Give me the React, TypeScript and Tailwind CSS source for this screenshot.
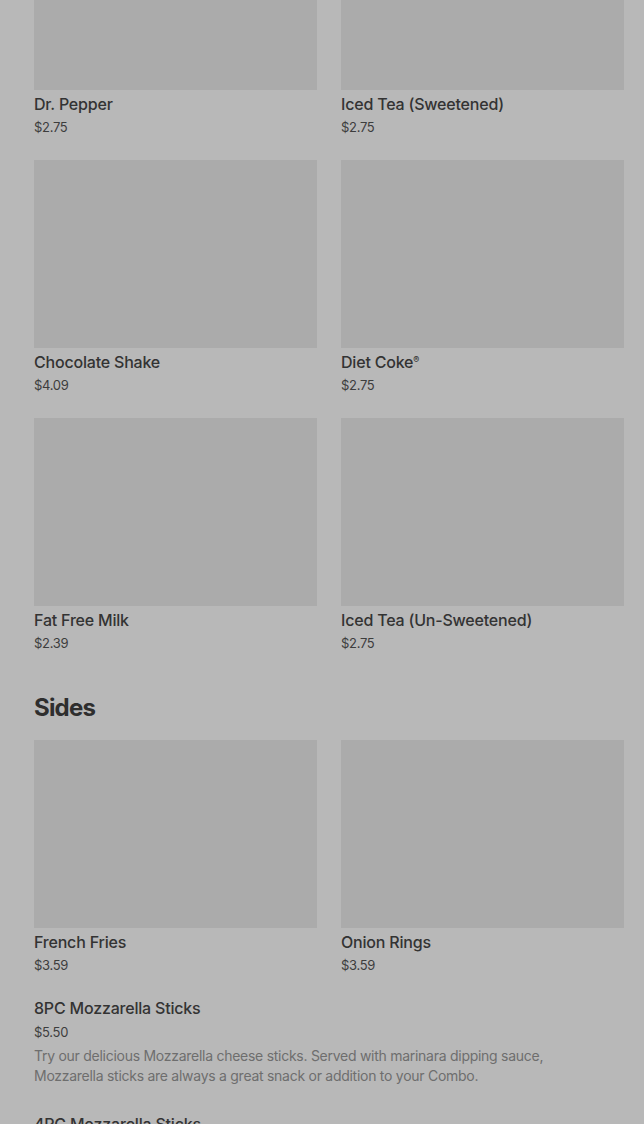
type Item = { name: string; price: string }

const drinks: Item[] = [
  { name: 'Dr. Pepper', price: '$2.75' },
  { name: 'Iced Tea (Sweetened)', price: '$2.75' },
  { name: 'Chocolate Shake', price: '$4.09' },
  { name: 'Diet Coke®', price: '$2.75' },
  { name: 'Fat Free Milk', price: '$2.39' },
  { name: 'Iced Tea (Un-Sweetened)', price: '$2.75' },
]

const sides: Item[] = [
  { name: 'French Fries', price: '$3.59' },
  { name: 'Onion Rings', price: '$3.59' },
]

function Card({ item }: { item: Item }) {
  const hasMark = item.name.endsWith('®')
  const label = hasMark ? item.name.slice(0, -1) : item.name
  return (
    <div className="flex flex-col">
      <div className="h-[188px] w-full bg-[#ababab]" />
      <div className="mt-[2px] text-[16px] leading-6 font-medium tracking-[-0.2px] text-[#333333]">
        {label}
        {hasMark && <sup className="text-[9px] -top-[0.6em]">®</sup>}
      </div>
      <div className="mt-px text-[13px] leading-5 tracking-[-0.3px] text-[#3d3d3d]">{item.price}</div>
    </div>
  )
}

export default function App() {
  return (
    <div className="h-[1124px] overflow-hidden bg-[#b8b8b8]" style={{ fontFamily: 'Inter, "Noto Sans", sans-serif' }}>
      <div className="mt-[-98px] px-[34px] pr-[20px]">
        <div className="grid grid-cols-2 gap-x-6 gap-y-[23px]">
          {drinks.map((d) => (
            <Card key={d.name} item={d} />
          ))}
        </div>

        <h2 className="mt-[39px] mb-4 text-[24px] leading-8 font-bold tracking-[-0.8px] text-[#2e2e2e]">Sides</h2>

        <div className="grid grid-cols-2 gap-x-6 gap-y-[23px]">
          {sides.map((s) => (
            <Card key={s.name} item={s} />
          ))}
        </div>

        <div className="mt-[21px] flex flex-col">
          <div className="text-[16px] leading-6 font-medium tracking-[-0.2px] text-[#333333]">8PC Mozzarella Sticks</div>
          <div className="mt-0.5 text-[13px] leading-5 tracking-[-0.3px] text-[#3d3d3d]">$5.50</div>
          <p className="mt-1 max-w-[540px] text-[14px] leading-5 tracking-[-0.27px] text-[#6e6e6e]">
            Try our delicious Mozzarella cheese sticks. Served with marinara dipping sauce, Mozzarella sticks are always a great snack or addition to your Combo.
          </p>
        </div>

        <div className="mt-[26px] text-[16px] leading-6 font-medium tracking-[-0.2px] text-[#333333]">4PC Mozzarella Sticks</div>
      </div>
    </div>
  )
}
